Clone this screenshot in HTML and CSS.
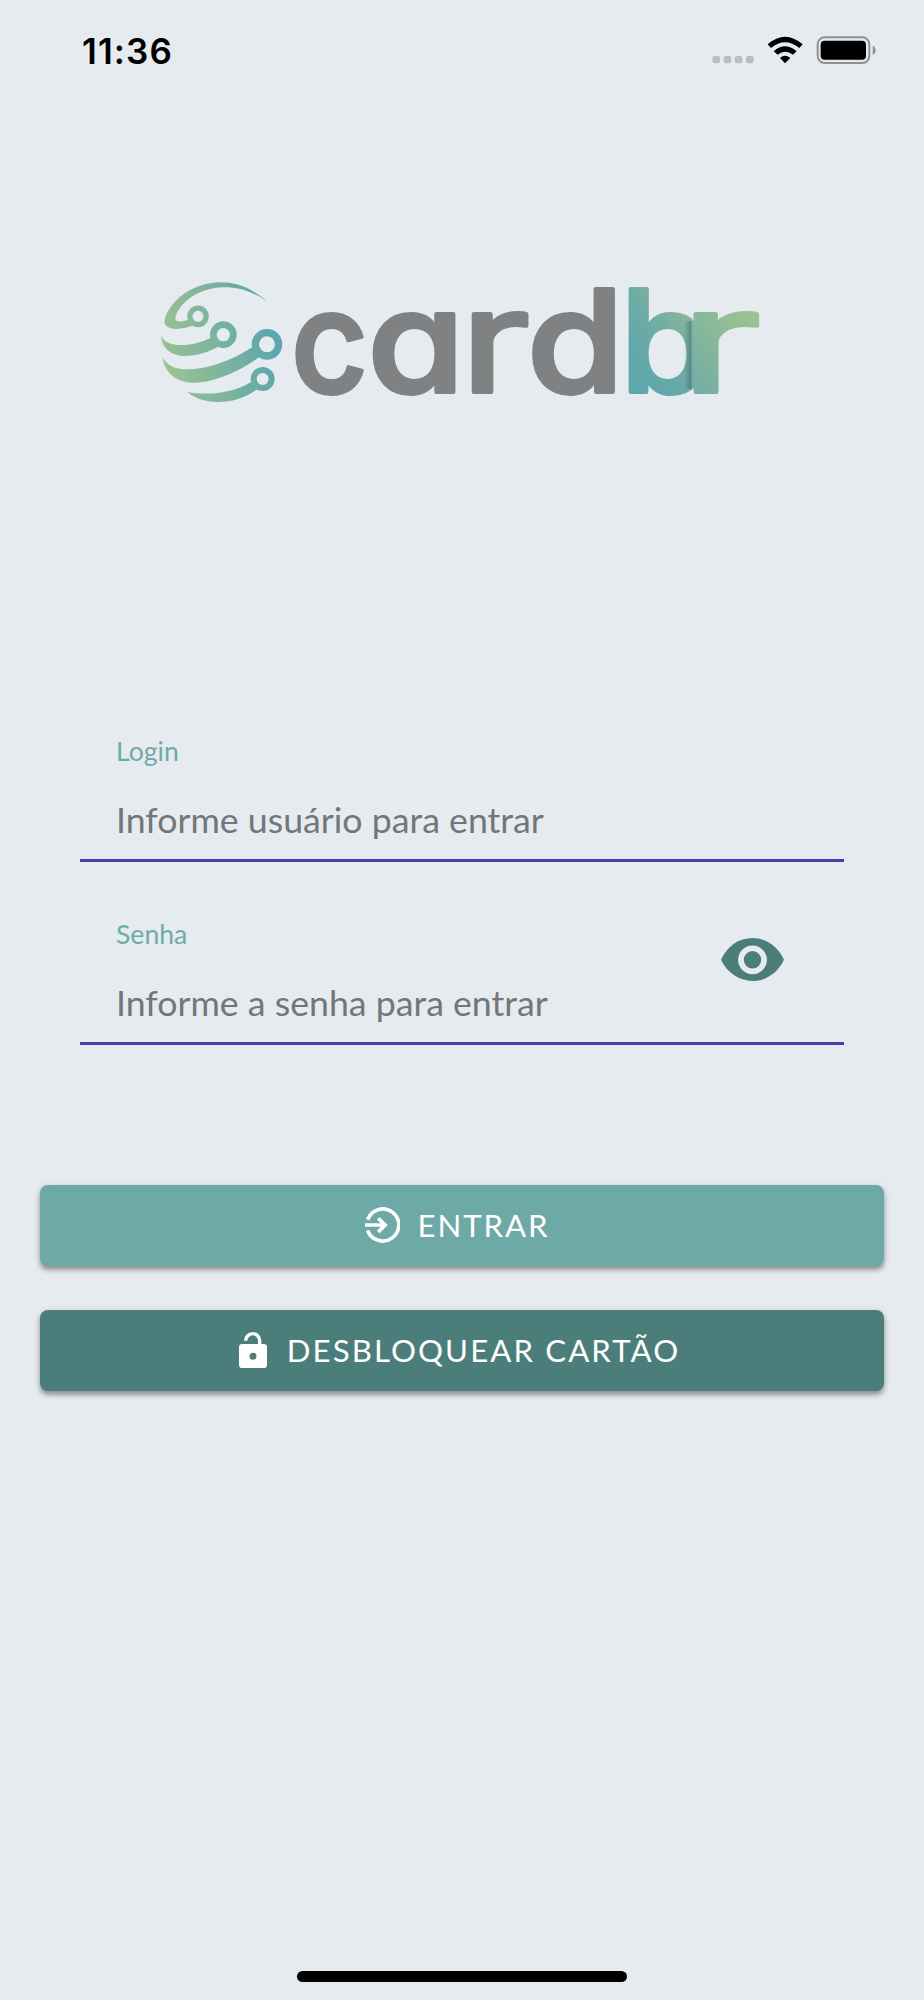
FILE: index.html
```html
<!DOCTYPE html>
<html lang="pt-BR">
<head>
<meta charset="utf-8">
<title>CardBR</title>
<link rel="stylesheet" href="styles.css">
</head>
<body>
<main class="screen">
  <header class="status">
    <span class="time">11:36</span>
    <svg class="status-icons" viewBox="700 20 200 70" aria-hidden="true">
      <g fill="#b9bec1"><rect x="712.5" y="56" width="7.6" height="7.3" rx="2"/><rect x="723.6" y="56" width="7.6" height="7.3" rx="2"/><rect x="734.8" y="56" width="7.6" height="7.3" rx="2"/><rect x="746" y="56" width="7.6" height="7.3" rx="2"/></g>
      <g transform="translate(700 20) scale(.33333)">
        <path d="M203 73Q255 28 308 73L298 84Q255 50 213 84ZM221 94Q255 64 290 94L279 104Q255 86 233 104ZM240 114Q255 101 271 114L255 130Z"/>
        <rect x="353" y="52" width="155" height="77" rx="21" fill="none" stroke="#8e9295" stroke-width="6"/>
        <rect x="362" y="62" width="136" height="57" rx="12"/>
        <path d="M518 77Q527 81 527 91Q527 101 518 105Z" fill="#8e9295"/>
      </g>
    </svg>
  </header>

  <svg class="logo" viewBox="150 230 630 225" role="img" aria-label="cardbr">
    <defs>
      <linearGradient id="arc" gradientUnits="userSpaceOnUse" x1="50" y1="150" x2="340" y2="80"><stop offset="0" stop-color="#96c091"/><stop offset="1" stop-color="#5ea6ab"/></linearGradient>
      <linearGradient id="wave" gradientUnits="userSpaceOnUse" x1="50" y1="310" x2="370" y2="210"><stop offset="0" stop-color="#9ac392"/><stop offset="1" stop-color="#5ea5ad"/></linearGradient>
      <linearGradient id="mid" gradientUnits="userSpaceOnUse" x1="30" y1="240" x2="270" y2="190"><stop offset="0" stop-color="#99c291"/><stop offset="1" stop-color="#6cada5"/></linearGradient>
      <linearGradient id="low" gradientUnits="userSpaceOnUse" x1="120" y1="380" x2="370" y2="320"><stop offset="0" stop-color="#8fbe94"/><stop offset="1" stop-color="#60a7aa"/></linearGradient>
      <linearGradient id="letters-b" gradientUnits="userSpaceOnUse" x1="632" y1="370" x2="698" y2="325"><stop offset="0" stop-color="#5fa7ac"/><stop offset=".5" stop-color="#6caba7"/><stop offset="1" stop-color="#88b79c"/></linearGradient>
      <linearGradient id="letters-r" gradientUnits="userSpaceOnUse" x1="690" y1="380" x2="757" y2="325"><stop offset="0" stop-color="#74ada5"/><stop offset="1" stop-color="#9ac292"/></linearGradient>
      <linearGradient id="fold" x1="0" x2="1" y1="0" y2="0"><stop offset="0" stop-color="#35635f" stop-opacity="0"/><stop offset="1" stop-color="#35635f" stop-opacity=".55"/></linearGradient>
    </defs>
    <g transform="translate(150 270) scale(.33333)">
      <path fill="url(#arc)" d="M350 93C300 50 255 37 210 37C130 38 62 90 45 145C38 166 55 177 78 177C105 176 122 170 135 163L119 148C105 154 90 156 81 153C70 148 80 125 96 106C150 43 260 30 350 93Z"/>
      <circle cx="144" cy="139" r="24.5" fill="none" stroke="url(#arc)" stroke-width="16"/>
      <path fill="url(#mid)" d="M33 195C42 220 70 227 105 225C140 222 165 212 188 200L207 229C175 247 140 258 105 258C62 258 35 235 33 195Z"/>
      <circle cx="220" cy="194" r="30" fill="none" stroke="url(#mid)" stroke-width="20"/>
      <path fill="url(#wave)" d="M37 261C50 286 75 298 110 298C175 298 248 270 309 230L331 259C275 300 195 338 128 338C78 336 45 310 37 261Z"/>
      <circle cx="351" cy="223" r="35" fill="none" stroke="url(#wave)" stroke-width="22"/>
      <path fill="url(#low)" d="M112 366C180 377 245 370 305 335L322 357C285 385 240 397 200 396C165 395 132 384 112 366Z"/>
      <circle cx="338" cy="327" r="27" fill="none" stroke="url(#low)" stroke-width="18"/>
    </g>
    <text class="word word-card" y="392"><tspan x="291" textLength="77" lengthAdjust="spacingAndGlyphs">c</tspan><tspan x="367.5" textLength="97" lengthAdjust="spacingAndGlyphs">a</tspan><tspan class="thin" x="460" textLength="70" lengthAdjust="spacingAndGlyphs">r</tspan><tspan x="527" textLength="97" lengthAdjust="spacingAndGlyphs">d</tspan></text>
    <text class="word word-b" x="620" y="392" textLength="92" lengthAdjust="spacingAndGlyphs">b</text>
    <rect x="684" y="321" width="7.5" height="68" fill="url(#fold)"/>
    <text class="word word-r thin" x="680" y="392" textLength="81" lengthAdjust="spacingAndGlyphs">r</text>
  </svg>

  <form class="form">
    <label class="field">
      <span class="label">Login</span>
      <input class="input" type="text" placeholder="Informe usuário para entrar">
    </label>
    <div class="field field-password">
      <label class="field-main"><span class="label">Senha</span>
      <input class="input" type="password" placeholder="Informe a senha para entrar"></label>
      <svg class="eye" viewBox="0 0 188 128" aria-hidden="true"><path fill="#4b7e7a" d="M0 65C18 25 53 0 94 0S170 25 188 65C170 103 135 128 94 128S18 103 0 65Z"/><circle cx="94" cy="65" r="34.500" fill="#4b7e7a" stroke="#e6ebef" stroke-width="17"/></svg>
    </div>
  </form>

  <div class="actions">
    <button class="button enter" type="button">
      <svg class="icon-enter" viewBox="0 0 106 108" aria-hidden="true"><g fill="none" stroke="#fff" stroke-width="11"><path d="M8 38A48.500 48.500 0 1 1 8 70M0 54H62M40 34L61 54L40 75"/></g></svg>
      <span>ENTRAR</span>
    </button>
    <button class="button unlock" type="button">
      <svg class="icon-lock" viewBox="0 0 84 108" aria-hidden="true"><path fill="none" stroke="#fff" stroke-width="10" d="M20 26A21 21 0 0 1 62 26V42"/><path fill="#fff" fill-rule="evenodd" d="M10 36H74Q84 36 84 46V98Q84 108 74 108H10Q0 108 0 98V46Q0 36 10 36ZM42 62A10.500 10.500 0 1 0 42 83A10.500 10.500 0 1 0 42 62Z"/></svg>
      <span>DESBLOQUEAR CARTÃO</span>
    </button>
  </div>
  <div class="home-bar"></div>
</main>
</body>
</html>
```
FILE: styles.css
```css
* { box-sizing: border-box; }
body { margin: 0; background: #e6ebef; font-family: Lato, sans-serif; }
.screen { display: flex; flex-direction: column; width: 924px; height: 2000px; overflow: hidden; background: #e6ebef; }
.status { display: flex; justify-content: space-between; height: 90px; padding: 20px 24px 0 82px; }
.time { font: 600 35px/62px Inter, sans-serif; letter-spacing: 1.1px; color: #000; }
.status-icons { width: 200px; height: 70px; }
.logo { width: 630px; height: 225px; margin: 140px 0 0 150px; flex: none; }
.word { font: 500 142px Inter, sans-serif; font-feature-settings: "cv11"; stroke-width: 4; stroke-linejoin: round; }
.word-card { fill: #808183; stroke: #808183; }
.word-b { fill: url(#letters-b); stroke: url(#letters-b); }
.word-r { fill: url(#letters-r); stroke: url(#letters-r); }
.thin { font-weight: 400; }
.form { display: flex; flex-direction: column; padding: 0 80px; margin-top: 261px; }
.field { display: flex; flex-direction: column; height: 146px; padding: 19px 36px 0; margin-bottom: 37px; border-bottom: 3px solid #4a3da8; }
.field-password { flex-direction: row; justify-content: space-between; margin-bottom: 0; }
.field-main { display: flex; flex-direction: column; width: 520px; }
.label { font-size: 26.6px; line-height: 32px; color: #6eaba8; }
.input { width: 100%; height: 48px; margin-top: 29px; padding: 0; border: 0; outline: 0; background: transparent; font: 35.7px/48px Lato, sans-serif; color: #737679; }
.input::placeholder { color: #737679; opacity: 1; }
.eye { width: 63px; height: 43px; margin: 20px 24px 0 0; }
.actions { display: flex; flex-direction: column; gap: 44px; margin: 140px 40px 0; }
.button { display: flex; align-items: center; justify-content: center; height: 81px; padding: 0 9px 2px 0; border: 0; border-radius: 8px; color: #fff; font: 31.2px/40px Lato, sans-serif; letter-spacing: 1.95px; box-shadow: 0 4px 5px rgba(0, 0, 0, .35), 0 0 8px rgba(0, 0, 0, .08); }
.enter { background: #6daaa7; }
.unlock { padding-right: 5px; letter-spacing: 2.1px; background: #4b7e7a; }
.icon-enter { width: 35px; height: 36px; margin-right: 17px; }
.icon-lock { width: 28px; height: 36px; margin-right: 20px; }
.home-bar { width: 330px; height: 11px; margin: auto auto 18px; border-radius: 6px; background: #000; }
```
